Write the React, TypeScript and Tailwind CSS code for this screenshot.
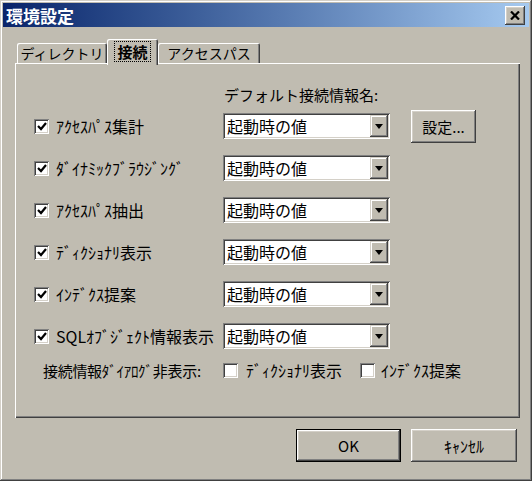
const rows = [
  "ｱｸｾｽﾊﾟｽ集計",
  "ﾀﾞｲﾅﾐｯｸﾌﾞﾗｳｼﾞﾝｸﾞ",
  "ｱｸｾｽﾊﾟｽ抽出",
  "ﾃﾞｨｸｼｮﾅﾘ表示",
  "ｲﾝﾃﾞｸｽ提案",
  "SQLｵﾌﾞｼﾞｪｸﾄ情報表示",
];

function CheckBox({ checked }: { checked?: boolean }) {
  return (
    <div className="flex h-[15px] w-[15px] shrink-0 items-center justify-center bg-white shadow-[inset_1px_1px_#808080,inset_-1px_-1px_#ffffff,inset_2px_2px_#404040,inset_-2px_-2px_#d4d0c8]">
      {checked && (
        <svg width="10" height="10" viewBox="0 0 10 10">
          <path d="M1 5 L4 8 L9 2" fill="none" stroke="#000" strokeWidth="2.2" />
        </svg>
      )}
    </div>
  );
}

function Combo() {
  return (
    <div className="flex h-[26px] w-[167px] items-center bg-white p-[2px] shadow-[inset_1px_1px_#808080,inset_-1px_-1px_#ffffff,inset_2px_2px_#404040,inset_-2px_-2px_#d4d0c8]">
      <span className="flex-1 pl-[2px] text-[16px] leading-none">起動時の値</span>
      <div className="flex h-[22px] w-[18px] items-center justify-center bg-[#c0bcb1] shadow-[inset_-1px_-1px_#404040,inset_1px_1px_#d4d0c8,inset_-2px_-2px_#808080,inset_2px_2px_#ffffff]">
        <svg width="8" height="5" viewBox="0 0 8 5">
          <path d="M0 0 H8 L4 5 Z" fill="#000" />
        </svg>
      </div>
    </div>
  );
}

export default function App() {
  return (
    <div className="h-[481px] w-[532px] bg-[#c0bcb1] p-[3px] font-['Noto_Sans_CJK_JP',sans-serif] text-black shadow-[inset_-1px_-1px_#404040,inset_1px_1px_#d4d0c8,inset_-2px_-2px_#808080,inset_2px_2px_#ffffff]">
      {/* title bar */}
      <div className="flex h-[24px] items-center justify-between bg-gradient-to-r from-[#0a246a] to-[#a6caf0] pl-[3px] pr-[4px]">
        <span className="text-[17px] font-bold leading-none text-white">環境設定</span>
        <div className="flex h-[19px] w-[20px] items-center justify-center bg-[#c0bcb1] shadow-[inset_-1px_-1px_#404040,inset_1px_1px_#ffffff,inset_-2px_-2px_#808080,inset_2px_2px_#d4d0c8]">
          <svg width="10" height="9" viewBox="0 0 10 9">
            <path d="M1 0.5 L9 8.5 M9 0.5 L1 8.5" stroke="#000" strokeWidth="2.2" />
          </svg>
        </div>
      </div>

      {/* tabs */}
      <div className="ml-[12px] mt-[12px] flex items-end pl-[2px]">
        <div className="flex h-[20px] w-[90px] items-center justify-center rounded-t-[2px] text-[14px] leading-none shadow-[inset_1px_1px_#ffffff,inset_-1px_0_#404040,inset_-2px_0_#808080]">
          ディレクトリ
        </div>
        <div className="relative z-10 -mb-[2px] flex h-[26px] w-[51px] items-start justify-center rounded-t-[2px] bg-[#c0bcb1] pt-[2px] shadow-[inset_1px_1px_#ffffff,inset_-1px_0_#404040,inset_-2px_0_#808080]">
          <span className="border border-dotted border-black px-[2px] py-[1px] text-[15px] font-semibold leading-[17px]">接続</span>
        </div>
        <div className="flex h-[20px] w-[102px] items-center justify-center rounded-t-[2px] text-[14px] leading-none shadow-[inset_1px_1px_#ffffff,inset_-1px_0_#404040,inset_-2px_0_#808080]">
          アクセスパス
        </div>
      </div>

      {/* panel */}
      <div className="ml-[12px] h-[355px] w-[505px] p-[2px] pl-[19px] pt-[22px] shadow-[inset_1px_1px_#ffffff,inset_-1px_-1px_#404040,inset_-2px_-2px_#808080]">
        <div className="ml-[190px] h-[20px] text-[15px] leading-[20px]">デフォルト接続情報名:</div>
        {rows.map((label, i) => (
          <div key={label} className="flex h-[42px] items-center">
            <div className="flex w-[189px] items-center gap-[7px]">
              <CheckBox checked />
              <span className="whitespace-nowrap text-[16px] leading-none">{label}</span>
            </div>
            <Combo />
            {i === 0 && (
              <div className="ml-[21px] flex h-[33px] w-[65px] items-center justify-center text-[15px] leading-none shadow-[inset_-1px_-1px_#404040,inset_1px_1px_#ffffff,inset_-2px_-2px_#808080,inset_2px_2px_#d4d0c8]">
                設定...
              </div>
            )}
          </div>
        ))}
        <div className="flex h-[26px] items-center">
          <div className="w-[189px] whitespace-nowrap pl-[9px] text-[15px] leading-none tracking-[-0.3px]">接続情報ﾀﾞｲｱﾛｸﾞ非表示:</div>
          <div className="flex w-[137px] items-center gap-[8px]">
            <CheckBox />
            <span className="whitespace-nowrap text-[16px] leading-none">ﾃﾞｨｸｼｮﾅﾘ表示</span>
          </div>
          <div className="flex items-center gap-[6px]">
            <CheckBox />
            <span className="whitespace-nowrap text-[16px] leading-none">ｲﾝﾃﾞｸｽ提案</span>
          </div>
        </div>
      </div>

      {/* buttons */}
      <div className="mt-[11px] flex justify-end gap-[10px] pr-[12px]">
        <div className="flex h-[33px] w-[105px] items-center justify-center border border-black text-[15px] leading-none shadow-[inset_-1px_-1px_#404040,inset_1px_1px_#ffffff,inset_-2px_-2px_#808080,inset_2px_2px_#d4d0c8]">
          OK
        </div>
        <div className="flex h-[33px] w-[106px] items-center justify-center text-[16px] leading-none shadow-[inset_-1px_-1px_#404040,inset_1px_1px_#ffffff,inset_-2px_-2px_#808080,inset_2px_2px_#d4d0c8]">
          ｷｬﾝｾﾙ
        </div>
      </div>
    </div>
  );
}
